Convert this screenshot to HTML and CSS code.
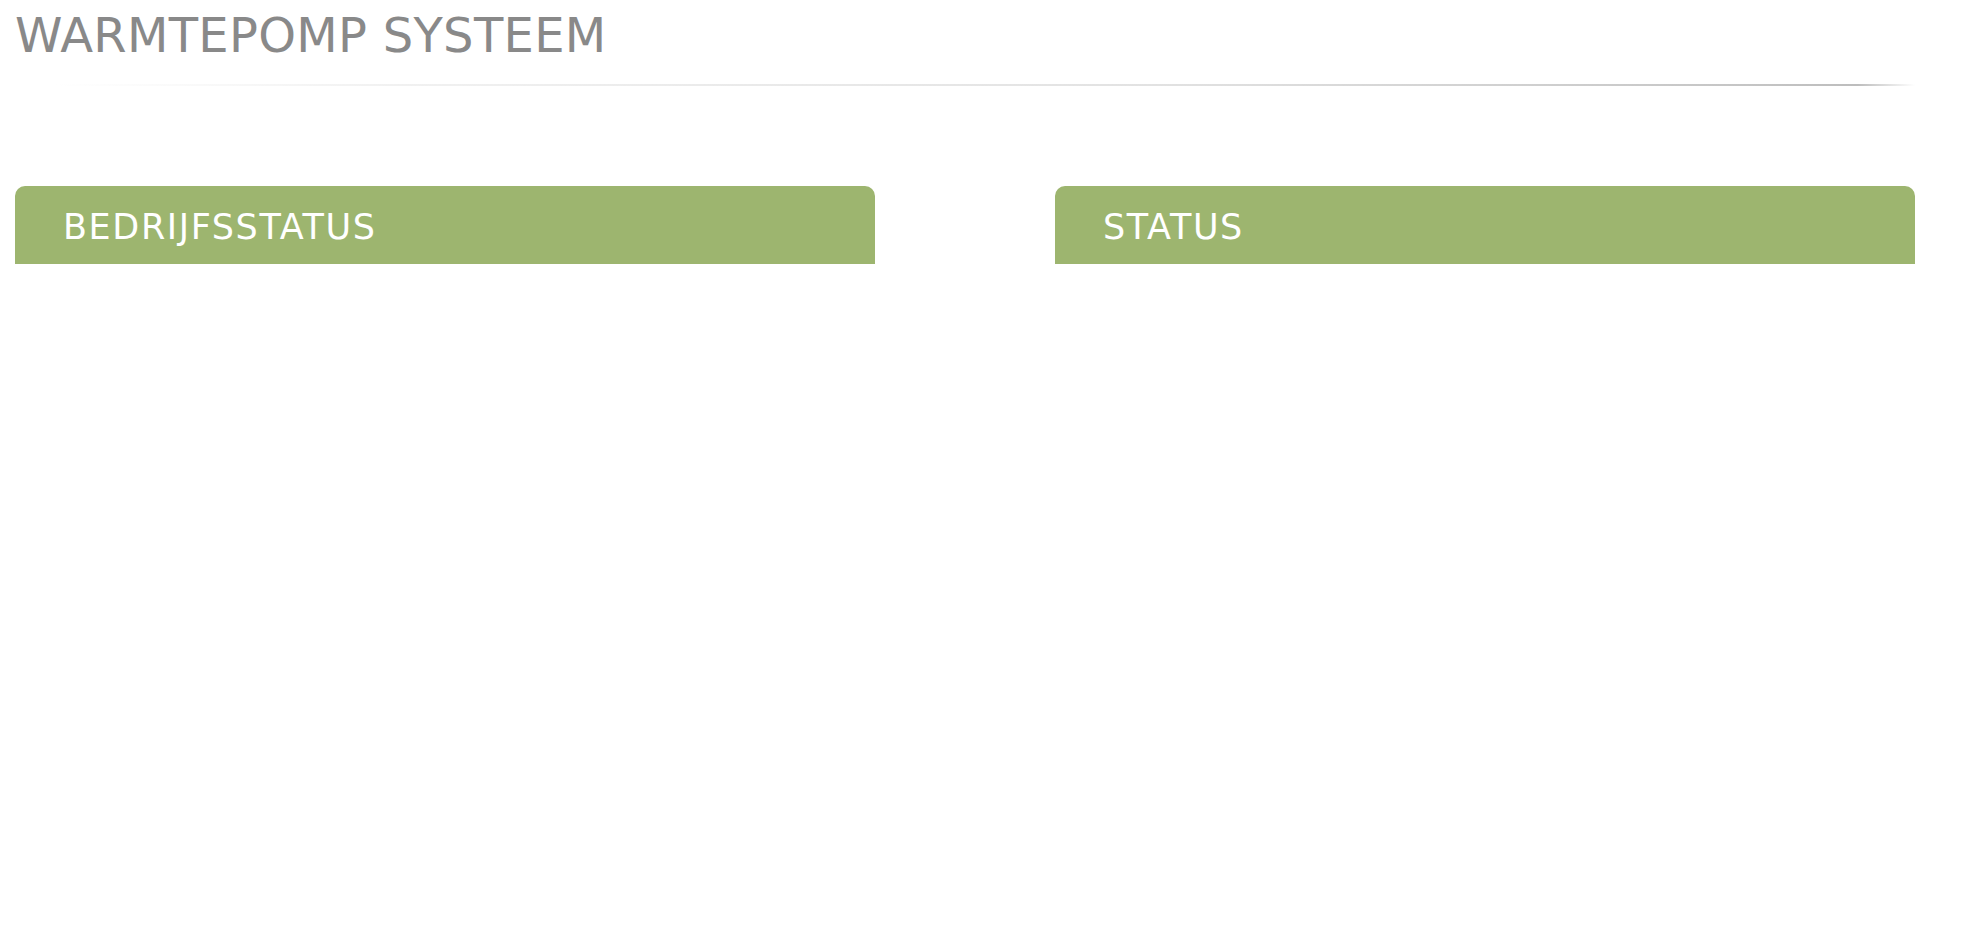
FILE: index.html
```html
<!DOCTYPE html>
<html lang="nl">
<head>
<meta charset="utf-8">
<title>Warmtepomp systeem</title>
<link rel="stylesheet" href="styles.css">
</head>
<body>
<div class="page">
  <header class="page-header">
    <h1 class="page-title">WARMTEPOMP SYSTEEM</h1>
    <div class="rule"></div>
  </header>
  <main class="panels">
    <section class="panel">
      <h2 class="panel-head">BEDRIJFSSTATUS</h2>
    </section>
    <section class="panel">
      <h2 class="panel-head">STATUS</h2>
    </section>
  </main>
</div>
</body>
</html>
```
FILE: styles.css
```css
html, body {
  margin: 0;
  padding: 0;
  background: #ffffff;
}

body {
  font-family: "DejaVu Sans", Verdana, sans-serif;
}

.page {
  width: 1900px;
  margin-left: 15px;
}

.page-header {
  display: flex;
  flex-direction: column;
}

.page-title {
  margin: 0;
  padding-top: 7px;
  font-size: 48px;
  line-height: 56px;
  font-weight: normal;
  color: #898989;
  letter-spacing: 0.3px;
}

.rule {
  margin-top: 21px;
  height: 2px;
  background: linear-gradient(to right,
    rgba(255,255,255,0) 2%,
    #f1f1f1 20%,
    #e2e2e2 60%,
    #c4c4c4 92%,
    #bdbdbd 97%,
    rgba(255,255,255,0) 100%);
}

.panels {
  margin-top: 100px;
  display: grid;
  grid-template-columns: 860px 860px;
  column-gap: 180px;
}

.panel-head {
  margin: 0;
  padding: 21px 46px 16px 48px;
  background: #9db56f;
  border-radius: 10px 10px 0 0;
  color: #ffffff;
  font-size: 35px;
  line-height: 41px;
  font-weight: normal;
  letter-spacing: 1.6px;
}
```
